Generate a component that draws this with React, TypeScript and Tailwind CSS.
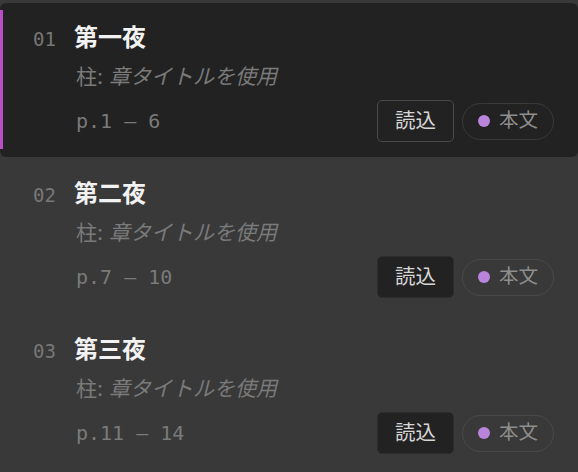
const chapters = [
  { no: "01", title: "第一夜", range: "p.1 — 6", active: true },
  { no: "02", title: "第二夜", range: "p.7 — 10", active: false },
  { no: "03", title: "第三夜", range: "p.11 — 14", active: false },
];

const mono = "font-['DejaVu_Sans_Mono','Liberation_Mono',monospace]";
const sans = "font-['Inter','Noto_Sans_CJK_JP',sans-serif]";

function ChapterRow({ no, title, range, active }: { no: string; title: string; range: string; active: boolean }) {
  return (
    <div className={`relative flex rounded-md pl-[33px] pr-[24px] pt-[20px] pb-[15px] ${active ? "bg-[#222222]" : ""}`}>
      {active && <div className="absolute left-0 top-[7px] bottom-[8px] w-[3px] bg-[#b84fc4]" />}
      <div className={`${mono} w-[41px] shrink-0 pt-[1px] text-[19px] leading-[30px] text-[#777777]`}>{no}</div>
      <div className="flex min-w-0 flex-1 flex-col">
        <div className={`${sans} text-[24px] font-bold leading-[30px] text-[#f2f2f2]`}>{title}</div>
        <div className={`${sans} mt-[11px] pl-[2px] text-[21px] leading-[26px] text-[#7a7a7a]`}>
          柱: <span className="italic">章タイトルを使用</span>
        </div>
        <div className="mt-[10px] flex items-center justify-between">
          <div className={`${mono} pl-[2px] text-[20px] leading-[26px] text-[#7a7a7a]`}>{range}</div>
          <div className="flex items-center gap-[8px]">
            <button
              className={`${sans} h-[42px] w-[77px] rounded-[5px] border text-[20.5px] leading-[26px] text-[#d6d6d6] ${
                active ? "border-[#4a4a4a] bg-[#222222]" : "border-[#2c2c2c] bg-[#222222]"
              }`}
            >
              読込
            </button>
            <div
              className={`${sans} flex h-[37px] w-[92px] items-center justify-center gap-[9px] rounded-full border text-[19.5px] text-[#8e8e8e] ${
                active ? "border-[#3a3a3a]" : "border-[#4a4a4a]"
              }`}
            >
              <span className="h-[12px] w-[12px] rounded-full bg-[#b984dc]" />
              本文
            </div>
          </div>
        </div>
      </div>
    </div>
  );
}

export default function App() {
  return (
    <div className="flex h-[472px] w-[578px] flex-col gap-[2px] overflow-hidden bg-[#393939] pt-[3px]">
      {chapters.map((c) => (
        <ChapterRow key={c.no} {...c} />
      ))}
    </div>
  );
}
